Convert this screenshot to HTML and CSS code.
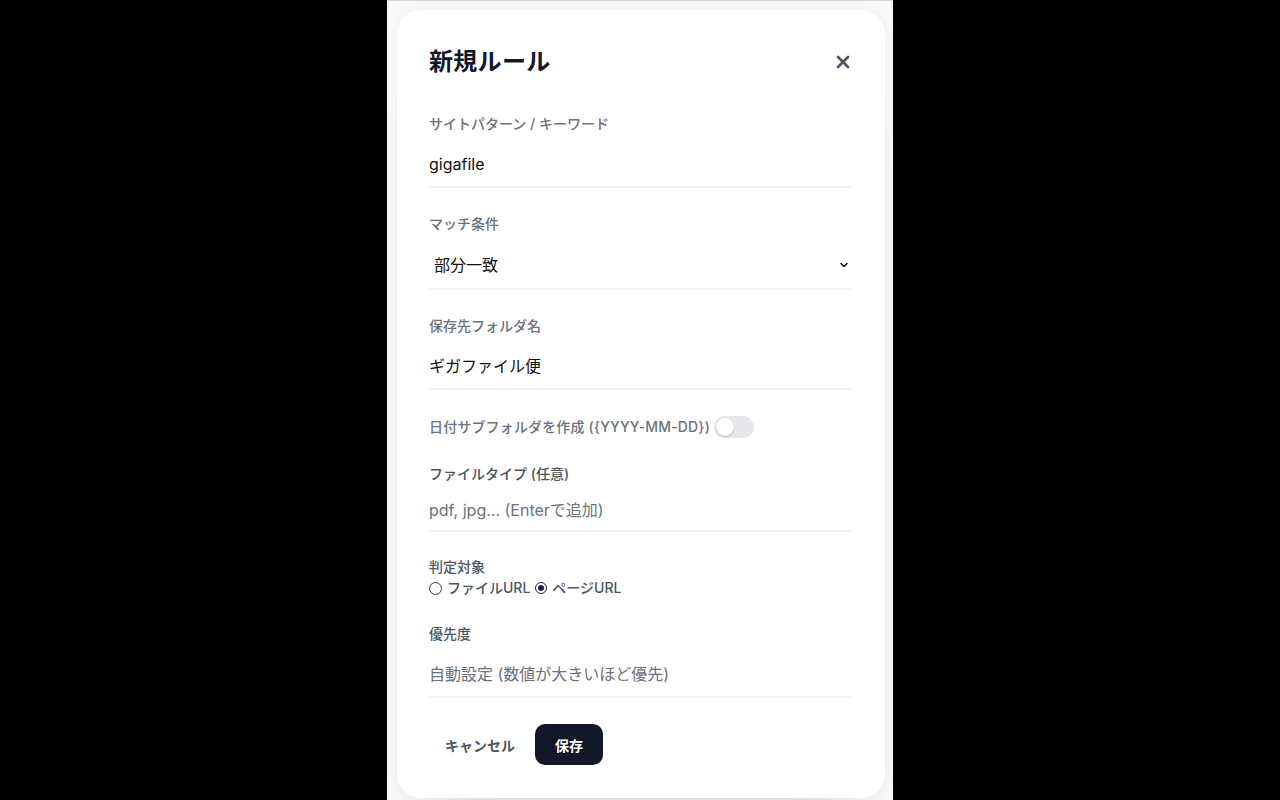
FILE: index.html
```html
<!DOCTYPE html>
<html lang="ja">
<head>
<meta charset="utf-8">
<title>新規ルール</title>
<link rel="stylesheet" href="styles.css">
</head>
<body>
<div class="panel">
  <div class="card">
    <div class="head">
      <h1 class="title">新規ルール</h1>
      <button class="close" aria-label="閉じる">
        <svg width="16" height="16" viewBox="0 0 16 16"><path d="M3 3L13 13M13 3L3 13" stroke="#4b5563" stroke-width="2.6" stroke-linecap="round"/></svg>
      </button>
    </div>

    <div class="field">
      <label class="label">サイトパターン / キーワード</label>
      <div class="input">gigafile</div>
    </div>

    <div class="field">
      <label class="label">マッチ条件</label>
      <div class="input select"><span class="sel-text">部分一致</span>
        <svg class="chev" width="10" height="10" viewBox="0 0 10 10"><path d="M2 3.5L5 6.5L8 3.5" stroke="#111" stroke-width="1.6" fill="none" stroke-linecap="round" stroke-linejoin="round"/></svg>
      </div>
    </div>

    <div class="field">
      <label class="label">保存先フォルダ名</label>
      <div class="input">ギガファイル便</div>
    </div>

    <div class="field toggle-row">
      <span class="label nomb">日付サブフォルダを作成 ({YYYY-MM-DD})</span>
      <span class="toggle"><span class="knob"></span></span>
    </div>

    <div class="field tightfield">
      <label class="label dark tight">ファイルタイプ (任意)</label>
      <div class="input ph short">pdf, jpg... (Enterで追加)</div>
    </div>

    <div class="field">
      <div class="label dark nomb">判定対象</div>
      <div class="radios">
        <span class="radio"><span class="dot"></span>ファイルURL</span>
        <span class="radio"><span class="dot on"></span>ページURL</span>
      </div>
    </div>

    <div class="field">
      <label class="label dark">優先度</label>
      <div class="input ph">自動設定 (数値が大きいほど優先)</div>
    </div>

    <div class="actions">
      <button class="btn cancel">キャンセル</button>
      <button class="btn save">保存</button>
    </div>
  </div>
</div>
</body>
</html>
```

FILE: styles.css
```css
html, body {
  margin: 0;
  padding: 0;
  background: #000;
  height: 100%;
}
body {
  font-family: Inter, "Noto Sans CJK JP", sans-serif;
  display: flex;
  justify-content: center;
}
.panel {
  width: 506px;
  min-height: 800px;
  background: #f9f9f9;
  border-top: 1px solid #d9d9d9;
  box-sizing: border-box;
  padding: 9px 8px 0 10px;
}
.card {
  background: #fff;
  border-radius: 24px;
  padding: 32px 32px 33px;
  box-shadow: 0 60px 60px -40px rgba(0,0,0,0.12), 0 0 12px rgba(0,0,0,0.05);
}
.head {
  display: flex;
  align-items: center;
  justify-content: space-between;
  height: 40px;
  margin-bottom: 32px;
}
.title {
  margin: 0;
  font-size: 24px;
  line-height: 32px;
  font-weight: 700;
  color: #111827;
  letter-spacing: 0.3px;
}
.close {
  border: 0;
  background: none;
  padding: 4px;
  margin-right: -2px;
  display: flex;
}
.field {
  margin-bottom: 26px;
}
.tightfield {
  margin-bottom: 25px;
}
.label {
  display: block;
  font-size: 14px;
  line-height: 20px;
  font-weight: 500;
  color: #6b7280;
  margin-bottom: 8px;
}
.label.dark { color: #4b5563; }
.label.tight { margin-bottom: 4px; }
.label.nomb { margin-bottom: 0; }
.input {
  font-size: 16px;
  line-height: 24px;
  color: #111;
  padding: 10px 0 10px;
  border-bottom: 2px solid #f3f4f6;
  height: 24px;
}
.input.short { padding-top: 10px; padding-bottom: 8px; }
.input.ph { color: #6b7280; }
.select {
  display: flex;
  align-items: center;
  justify-content: space-between;
  padding: 11px 0;
}
.sel-text { padding-left: 5px; }
.chev { margin-right: 4px; }
.toggle-row {
  display: flex;
  align-items: center;
  height: 22px;
}
.toggle-row .label {
  letter-spacing: 0.15px;
}
.toggle {
  width: 40px;
  height: 22px;
  border-radius: 11px;
  background: #e5e7eb;
  position: relative;
  margin-left: 4px;
}
.knob {
  position: absolute;
  left: 2px;
  top: 2px;
  width: 18px;
  height: 18px;
  border-radius: 50%;
  background: #fff;
  box-shadow: 0 1px 2px rgba(0,0,0,0.2);
}
.radios {
  display: flex;
  align-items: center;
  font-size: 14px;
  line-height: 20px;
  font-weight: 500;
  color: #4b5563;
  margin-top: 1px;
}
.radio {
  display: flex;
  align-items: center;
  margin-right: 5px;
}
.dot {
  width: 11px;
  height: 11px;
  border: 1px solid #374151;
  border-radius: 50%;
  margin-right: 5px;
  position: relative;
  box-sizing: content-box;
  background: #fff;
}
.dot.on {
  border: 1.5px solid #1e1b4b;
  width: 10px;
  height: 10px;
}
.dot.on::after {
  content: "";
  position: absolute;
  left: 2px;
  top: 2px;
  width: 6px;
  height: 6px;
  border-radius: 50%;
  background: #1e1b4b;
}
.actions {
  display: flex;
  align-items: center;
  gap: 4px;
  margin-top: 25px;
}
.btn {
  font-family: inherit;
  font-size: 14px;
  font-weight: 600;
  border: 0;
  height: 41px;
  border-radius: 10px;
  cursor: pointer;
}
.cancel {
  background: none;
  color: #4b5563;
  padding: 0 16px;
}
.save {
  background: #111827;
  color: #fff;
  padding: 0 20px;
  font-weight: 700;
}
```
